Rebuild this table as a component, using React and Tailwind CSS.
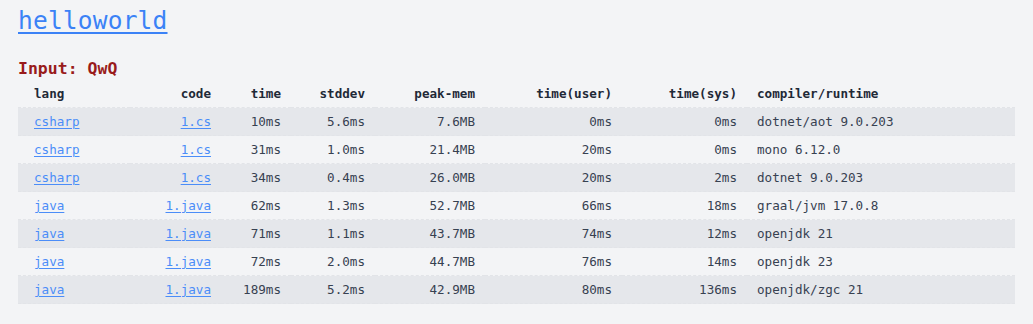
const rows = [
  ['csharp', '1.cs', '10ms', '5.6ms', '7.6MB', '0ms', '0ms', 'dotnet/aot 9.0.203'],
  ['csharp', '1.cs', '31ms', '1.0ms', '21.4MB', '20ms', '0ms', 'mono 6.12.0'],
  ['csharp', '1.cs', '34ms', '0.4ms', '26.0MB', '20ms', '2ms', 'dotnet 9.0.203'],
  ['java', '1.java', '62ms', '1.3ms', '52.7MB', '66ms', '18ms', 'graal/jvm 17.0.8'],
  ['java', '1.java', '71ms', '1.1ms', '43.7MB', '74ms', '12ms', 'openjdk 21'],
  ['java', '1.java', '72ms', '2.0ms', '44.7MB', '76ms', '14ms', 'openjdk 23'],
  ['java', '1.java', '189ms', '5.2ms', '42.9MB', '80ms', '136ms', 'openjdk/zgc 21'],
]

const headers = ['lang', 'code', 'time', 'stddev', 'peak-mem', 'time(user)', 'time(sys)', 'compiler/runtime']
const widths = ['w-[112px]', 'w-[91px]', 'w-[70px]', 'w-[84px]', 'w-[110px]', 'w-[137px]', 'w-[125px]', 'w-[268px]']

function align(i) {
  if (i === 0) return 'text-left pl-4 pr-2.5'
  if (i === 7) return 'text-left px-2.5'
  return 'text-right px-2.5'
}

export default function App() {
  return (
    <div className="min-h-screen bg-[#f3f4f6] px-[18px] pt-[3px] font-['DejaVu_Sans_Mono',monospace]">
      <h1 className="text-[24.5px] leading-[36px] tracking-[0.2px]">
        <a href="#" className="text-[#3b82f6] underline underline-offset-[3px]">helloworld</a>
      </h1>

      <h2 className="mt-[18px] text-[16.5px] leading-[24px] font-bold text-[#991b1b]">Input: QwQ</h2>

      <table className="-mt-px table-fixed w-[997px] border-collapse text-[12.6px] leading-[27px]">
        <colgroup>
          {widths.map((w, i) => <col key={i} className={w} />)}
        </colgroup>
        <thead>
          <tr className="border-b border-dashed border-[#e2e4e8]">
            {headers.map((h, i) => (
              <th key={h} className={`${align(i)} font-bold text-[#1f2937]`}>{h}</th>
            ))}
          </tr>
        </thead>
        <tbody>
          {rows.map((r, ri) => (
            <tr key={ri} className={`border-b border-dashed border-[#e2e4e8] ${ri % 2 === 0 ? 'bg-[#e5e7eb]' : ''}`}>
              {r.map((c, i) => (
                <td key={i} className={`${align(i)} text-[#374151]`}>
                  {i < 2
                    ? <a href="#" className="text-[#4b8df8] underline underline-offset-2">{c}</a>
                    : c}
                </td>
              ))}
            </tr>
          ))}
        </tbody>
      </table>
    </div>
  )
}
